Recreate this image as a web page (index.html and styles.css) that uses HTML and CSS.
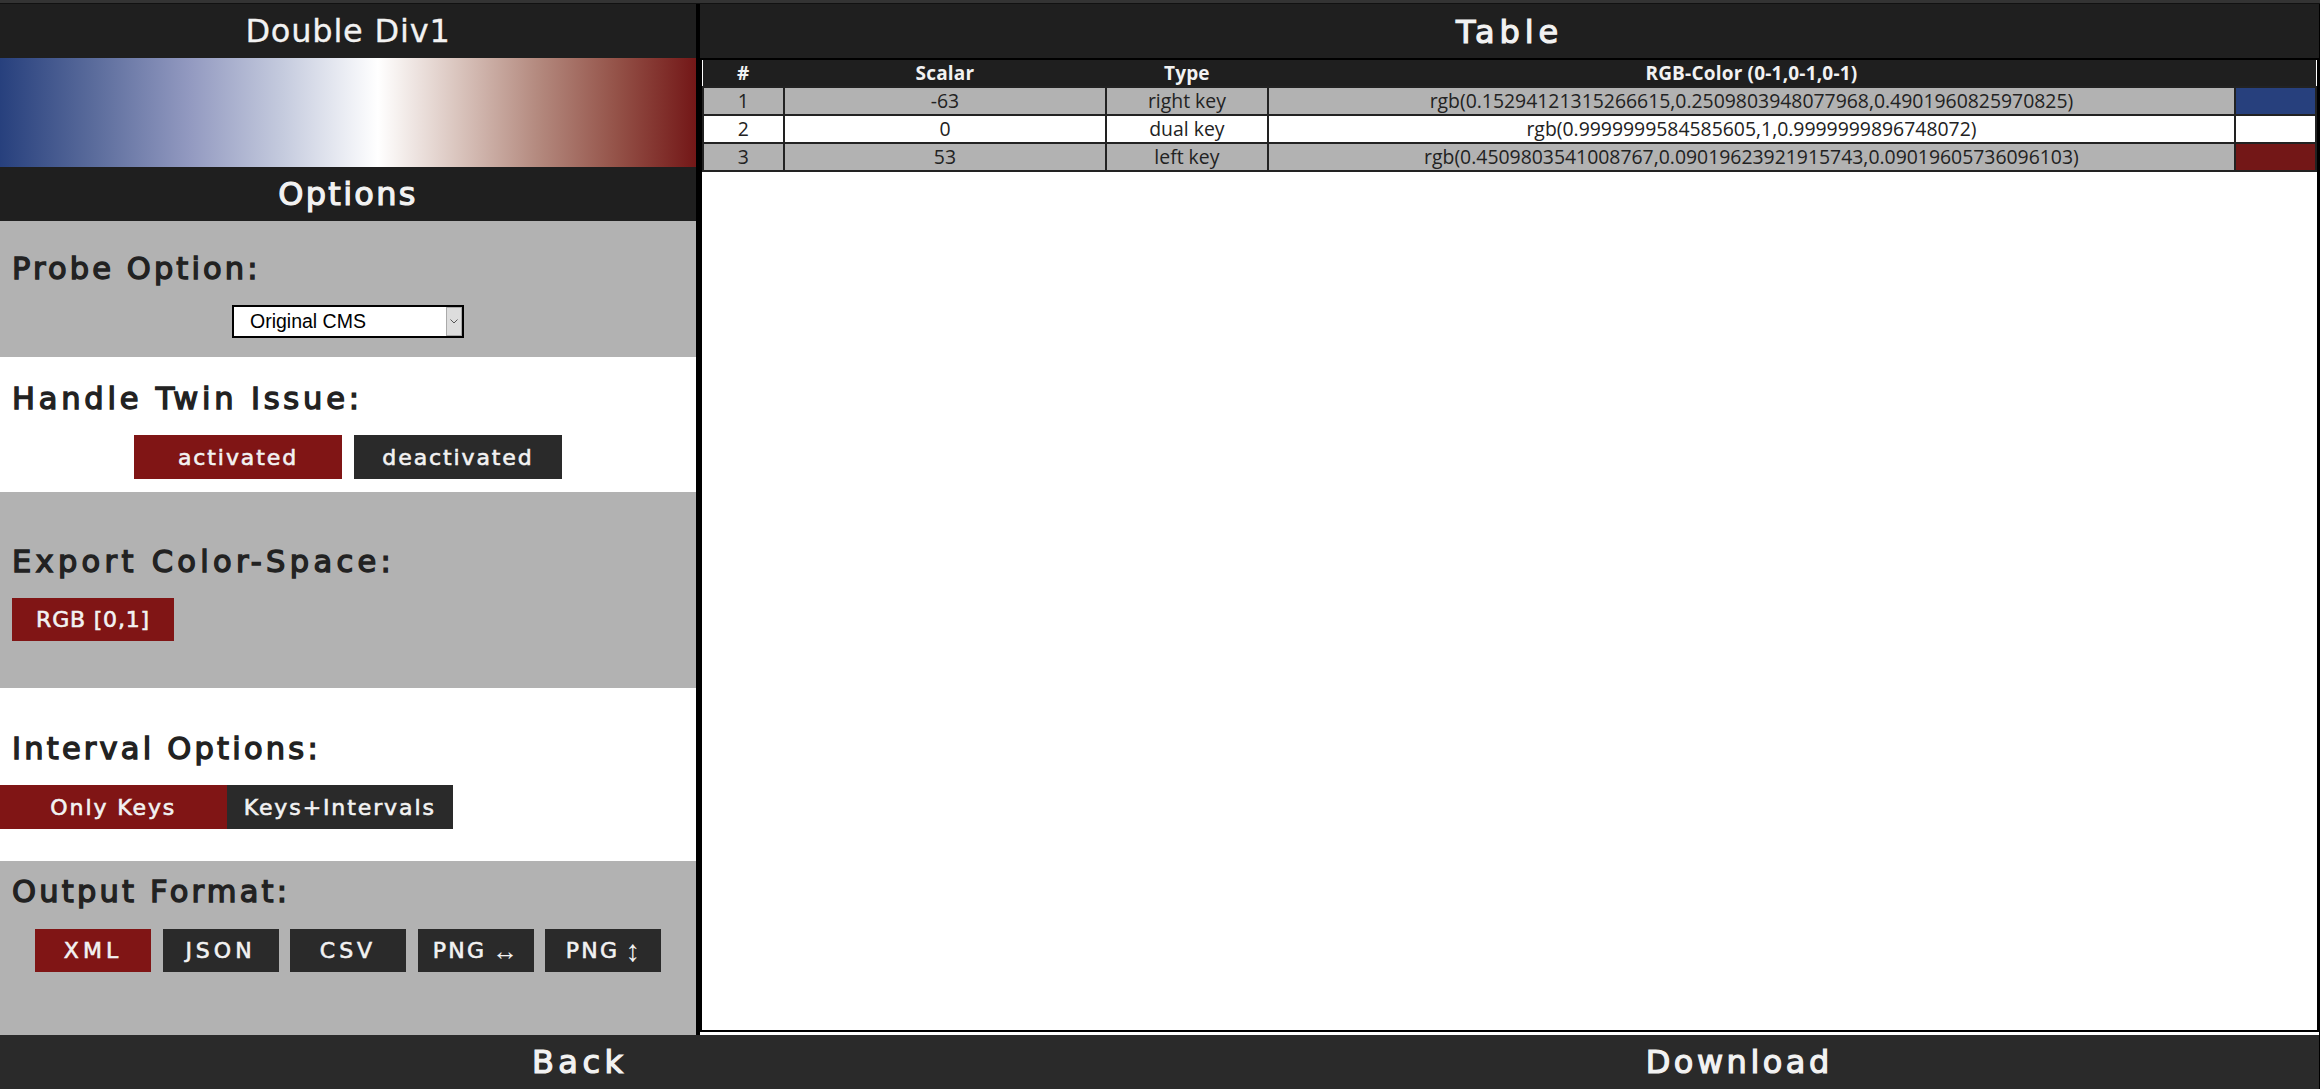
FILE: index.html
```html
<!DOCTYPE html>
<html lang="en">
<head>
<meta charset="utf-8">
<title>Double Div1</title>
<link rel="stylesheet" href="styles.css">
</head>
<body>
<div class="app">
  <div class="topstrip"></div>
  <main class="main">
    <aside class="left">
      <h1 class="title thin">Double Div1</h1>
      <div class="gradient"></div>
      <h1 class="title options">Options</h1>
      <section class="sec gray sec-probe">
        <h2 class="label">Probe Option:</h2>
        <div class="row center">
          <div class="selectwrap">
            <select class="select"><option>Original CMS</option></select>
            <span class="selectarrow">
              <svg width="8" height="5" viewBox="0 0 8 5"><path d="M0.5 0.5 L4 4 L7.5 0.5" fill="none" stroke="#555" stroke-width="1"/></svg>
            </span>
          </div>
        </div>
      </section>
      <section class="sec white sec-twin">
        <h2 class="label">Handle Twin Issue:</h2>
        <div class="row center gap-twin">
          <button class="btn red w-twin">activated</button>
          <button class="btn dark w-twin">deactivated</button>
        </div>
      </section>
      <section class="sec gray sec-export">
        <h2 class="label">Export Color-Space:</h2>
        <div class="row indent">
          <button class="btn red short w-rgb">RGB [0,1]</button>
        </div>
      </section>
      <section class="sec white sec-interval">
        <h2 class="label">Interval Options:</h2>
        <div class="row">
          <button class="btn red w-int">Only Keys</button>
          <button class="btn dark w-int">Keys+Intervals</button>
        </div>
      </section>
      <section class="sec gray sec-output">
        <h2 class="label">Output Format:</h2>
        <div class="row center gap-out">
          <button class="btn red short caps w-out">XML</button>
          <button class="btn dark short caps w-out">JSON</button>
          <button class="btn dark short caps w-out">CSV</button>
          <button class="btn dark short png w-out">PNG <span class="arrow">↔</span></button>
          <button class="btn dark short png w-out">PNG <span class="arrow arrow-v">↕</span></button>
        </div>
      </section>
    </aside>
    <div class="right">
      <h1 class="title table-title">Table</h1>
      <div class="tablearea">
        <table class="table">
          <colgroup>
            <col class="c5"><col class="c20"><col class="c10"><col class="c60"><col class="c5">
          </colgroup>
          <thead>
            <tr><th>#</th><th>Scalar</th><th>Type</th><th>RGB-Color (0-1,0-1,0-1)</th><th></th></tr>
          </thead>
          <tbody>
            <tr class="odd"><td>1</td><td>-63</td><td>right key</td><td>rgb(0.15294121315266615,0.2509803948077968,0.4901960825970825)</td><td class="sw-blue"></td></tr>
            <tr><td>2</td><td>0</td><td>dual key</td><td>rgb(0.9999999584585605,1,0.9999999896748072)</td><td class="sw-white"></td></tr>
            <tr class="odd"><td>3</td><td>53</td><td>left key</td><td>rgb(0.4509803541008767,0.09019623921915743,0.09019605736096103)</td><td class="sw-red"></td></tr>
          </tbody>
        </table>
      </div>
    </div>
  </main>
  <footer class="footer">
    <div class="foot-btn back">Back</div>
    <div class="foot-btn download">Download</div>
  </footer>
</div>
</body>
</html>
```
FILE: styles.css
```css
* { box-sizing: border-box; }
html, body { margin: 0; height: 100%; background: #000; }
body { font-family: "DejaVu Sans", sans-serif; overflow: hidden; }
.app { display: flex; flex-direction: column; height: 1089px; padding-right: 1px; }
.topstrip { height: 4px; background: #333; border-bottom: 1px solid #111; flex: none; margin-right: -1px; }
.main { display: flex; flex: 1; min-height: 0; }
.left { width: 696px; flex: none; display: flex; flex-direction: column; }
.right { flex: 1; margin-left: 4px; background: #fff; display: flex; flex-direction: column; padding-bottom: 3px; min-width: 0; }
.title { margin: 0; height: 54px; flex: none; background: #1f1f1f; color: #f2f2f2; font-size: 32px; line-height: 54px; text-align: center; font-weight: 400; -webkit-text-stroke: 1.2px #f2f2f2; }
.title.thin { letter-spacing: 0.8px; -webkit-text-stroke: 0.3px #f2f2f2; line-height: 55px; }
.options { letter-spacing: 2.3px; }
.table-title { letter-spacing: 4.9px; line-height: 56px; }
.gradient { height: 109px; flex: none; background: linear-gradient(to right, rgb(39,64,125) 0%, rgb(91,108,156) 13.6%, rgb(146,153,192) 27.15%, rgb(197,203,222) 40.7%, rgb(255,255,255) 54.3%, rgb(218,197,190) 65.7%, rgb(180,138,127) 77.15%, rgb(148,82,72) 88.6%, rgb(115,23,23) 100%); }
.sec { flex: none; }
.gray { background: #b2b2b2; }
.white { background: #fff; }
.label { margin: 0; padding-left: 12px; font-size: 30.5px; line-height: 32px; font-weight: 400; color: #222; -webkit-text-stroke: 1.4px #222; }
.row { display: flex; }
.center { justify-content: center; }
.indent { padding-left: 12px; }
.sec-probe { height: 136px; padding-top: 32px; }
.sec-probe .label { letter-spacing: 3.1px; }
.sec-probe .row { margin-top: 20px; }
.sec-twin { height: 135px; padding-top: 26px; }
.sec-twin .label { letter-spacing: 3.8px; }
.sec-twin .row { margin-top: 20px; }
.sec-export { height: 196px; padding-top: 54px; }
.sec-export .label { letter-spacing: 4.3px; }
.sec-export .row { margin-top: 20px; }
.sec-interval { height: 173px; padding-top: 45px; }
.sec-interval .label { letter-spacing: 3.2px; }
.sec-interval .row { margin-top: 20px; }
.sec-output { height: 174px; padding-top: 15px; }
.sec-output .label { letter-spacing: 3.2px; }
.sec-output .row { margin-top: 21px; }
.gap-twin { gap: 12px; }
.gap-out { gap: 11.5px; }
.btn { border: 0; margin: 0; padding: 0; height: 44px; color: #f2f2f2; font-family: "DejaVu Sans", sans-serif; font-size: 22px; letter-spacing: 1.9px; -webkit-text-stroke: 0.6px #f2f2f2; display: flex; align-items: center; justify-content: center; gap: 6px; }
.btn.short { height: 43px; letter-spacing: 0.8px; }
.btn.caps { letter-spacing: 4px; }
.btn.png { letter-spacing: 2.2px; }
.red { background: #801515; }
.dark { background: #2a2a2a; }
.w-twin { width: 208px; }
.w-rgb { width: 162px; }
.w-int { width: 226.5px; }
.w-out { width: 116px; }
.arrow { font-family: "Liberation Sans", sans-serif; font-size: 26px; line-height: 1; letter-spacing: 0; -webkit-text-stroke: 0; }
.arrow-v { font-size: 30px; }
.selectwrap { position: relative; width: 232px; height: 33px; }
.select { appearance: none; -webkit-appearance: none; display: block; width: 100%; height: 100%; margin: 0; border: 2px solid #000; border-radius: 0; background: #fff; color: #000; font-family: "Liberation Sans", Arial, sans-serif; font-size: 19.5px; padding: 0 0 2px 16px; }
.selectarrow { position: absolute; right: 2px; top: 2px; bottom: 2px; width: 16px; background: #ddd; border: 1px solid #aaa; display: flex; align-items: center; justify-content: center; }
.tablearea { flex: 1; min-height: 0; background: #fff; border: 2px solid #000; }
.table { width: 100%; table-layout: fixed; border-collapse: collapse; font-family: "Open Sans", sans-serif; font-size: 19.4px; line-height: 24px; color: #222; text-align: center; }
.c5 { width: 5%; }
.c20 { width: 20%; }
.c10 { width: 10%; }
.c60 { width: 60%; }
.table th { height: 27px; padding: 0; background: #1f1f1f; color: #f2f2f2; font-size: 19px; letter-spacing: 0.2px; font-weight: 700; border-bottom: 2px solid #222; }
.table td { height: 28px; padding: 0; border: 2px solid #222; background: #fff; white-space: nowrap; }
.odd td { background: #b2b2b2; }
.table .sw-blue { background: rgb(39,64,125); }
.table .sw-white { background: #fff; }
.table .sw-red { background: rgb(115,23,23); }
.footer { height: 54px; flex: none; display: flex; background: #2a2a2a; }
.foot-btn { flex: 1; text-align: center; color: #f2f2f2; font-size: 32px; line-height: 54px; -webkit-text-stroke: 1.2px #f2f2f2; }
.back { letter-spacing: 4.5px; }
.download { letter-spacing: 3.5px; }
```
